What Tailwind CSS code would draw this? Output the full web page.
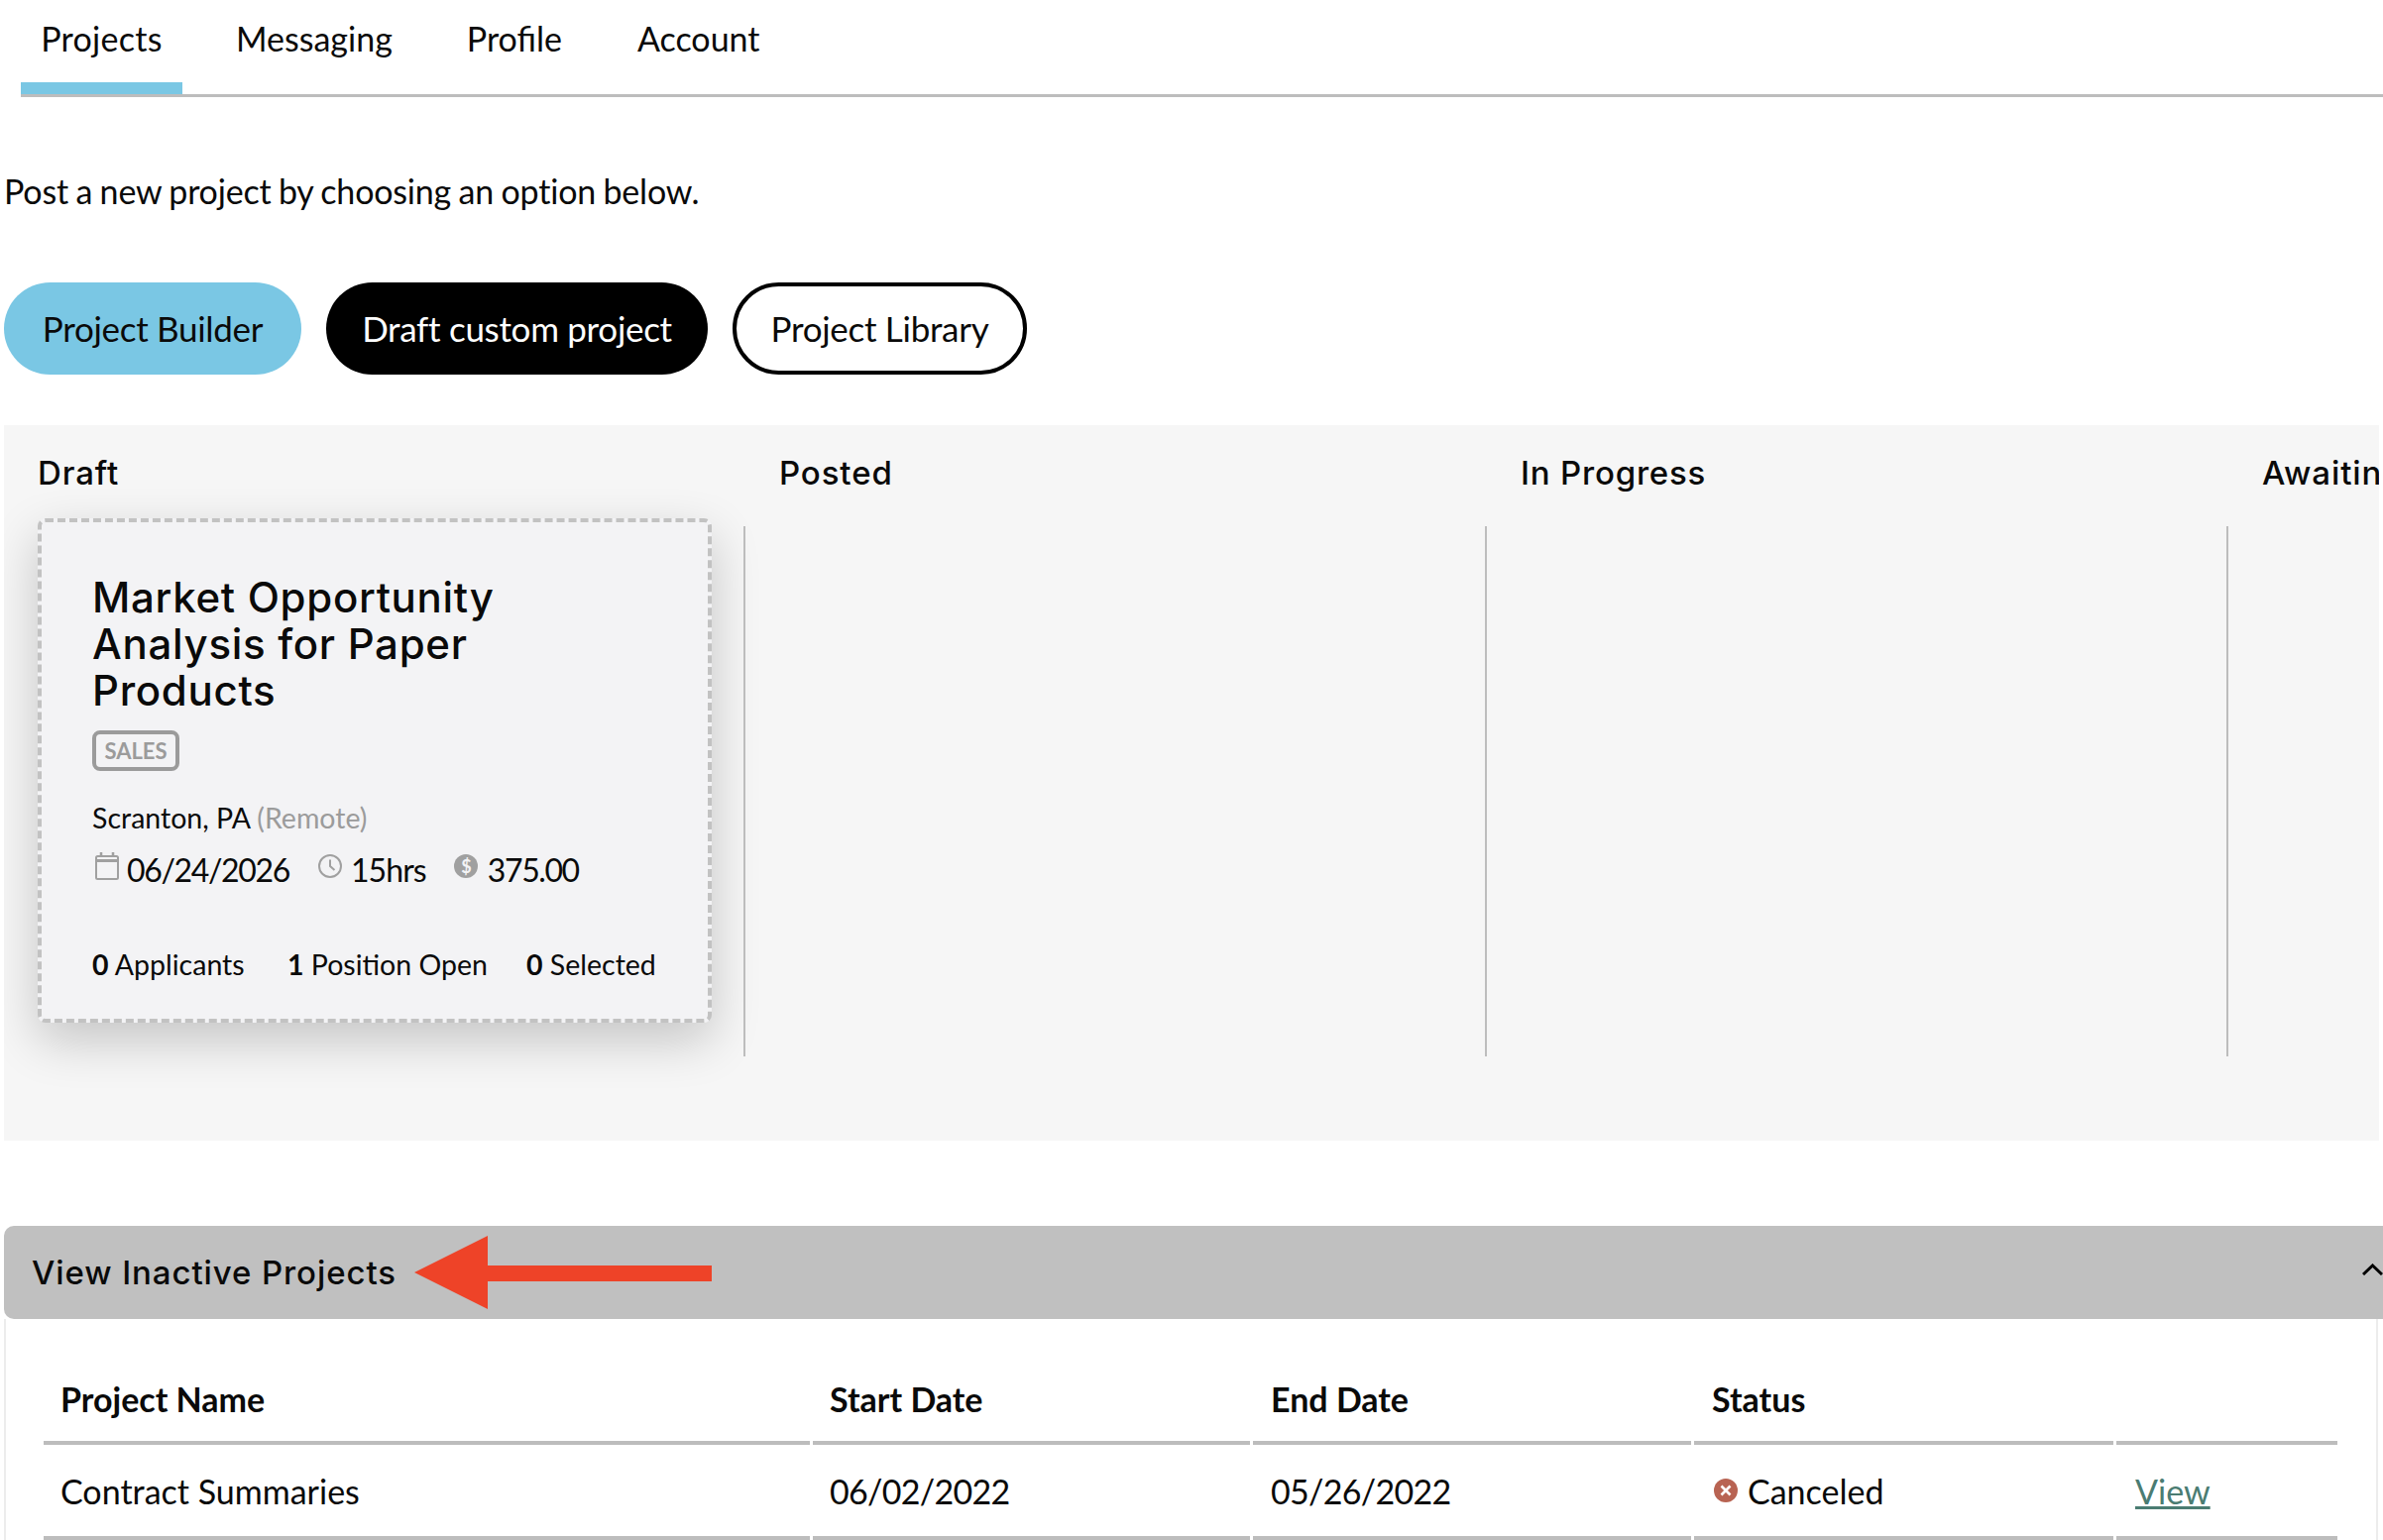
<!DOCTYPE html>
<html lang="en">
<head>
  <meta charset="UTF-8" />
  <title>Projects</title>
  <script src="https://cdn.jsdelivr.net/npm/@tailwindcss/browser@4"></script>
</head>
<body class="bg-white text-[#0a0a0a] font-['Lato',sans-serif]">
<div class="h-[1554px] w-[2404px] overflow-hidden">

  <!-- Tabs -->
  <nav class="ml-[21px] h-[98px] flex border-b-[3px] border-[#bdbdbd] text-[34px] leading-[77px]">
    <a class="w-[163px] h-[95px] text-center border-b-[12px] border-[#7ac7e4] tracking-[0.3px]">Projects</a>
    <a class="ml-[54px]">Messaging</a>
    <a class="ml-[75px]">Profile</a>
    <a class="ml-[76px]">Account</a>
  </nav>

  <p class="ml-[4px] mt-[72px] text-[34px] leading-[46px] tracking-[-0.2px] [word-spacing:-1px]">Post a new project by choosing an option below.</p>

  <!-- Buttons -->
  <div class="ml-[4px] mt-[69px] flex gap-[25px] text-[35px] tracking-[-0.3px]">
    <button class="w-[300px] h-[93px] rounded-full bg-[#7ac7e4]">Project Builder</button>
    <button class="w-[385px] h-[93px] rounded-full bg-black text-white">Draft custom project</button>
    <button class="w-[297px] h-[93px] rounded-full border-[4px] border-black">Project Library</button>
  </div>

  <!-- Board -->
  <section class="ml-[4px] mt-[51px] w-[2396px] h-[722px] bg-[#f6f6f6] overflow-hidden flex pl-[34px] font-['Inter',sans-serif]">
    <div class="w-[712px] shrink-0">
      <h3 class="pt-[25px] text-[33px] leading-[46px] font-medium tracking-[0.9px]">Draft</h3>
      <div class="mt-[23px] w-[680px] h-[509px] box-border bg-[#f3f3f5] border-[4px] border-dashed border-[#c2c2c2] rounded-[8px] shadow-[0_18px_50px_rgba(0,0,0,0.2)] pl-[51px] pt-[52px]">
        <h2 class="text-[42px] leading-[47px] font-medium tracking-[0.7px] w-[500px]">Market Opportunity Analysis for Paper Products</h2>
        <span class="mt-[17px] inline-block w-[88px] h-[41px] border-[4px] border-[#9b9b9b] rounded-[8px] text-center font-['Lato',sans-serif] text-[22px] leading-[33px] font-bold text-[#9b9b9b]">SALES</span>
        <div class="font-['Lato',sans-serif]">
          <p class="mt-[25px] text-[28.5px] leading-[44px]">Scranton, PA <span class="text-[#9b9b9b]">(Remote)</span></p>
          <div class="mt-[9px] flex items-center text-[32px] leading-[44px] tracking-[-0.9px]">
            <svg class="ml-[3px] -mt-[8px] w-[24px] h-[28px]" viewBox="0 0 24 28" fill="none" stroke="#a0a0a0" stroke-width="2"><rect x="1" y="4" width="22" height="23" rx="1.5"/><path d="M1 8.5h22" stroke-width="3"/><path d="M6 0v5M18 0v5" stroke-width="2.5"/></svg>
            <span class="ml-[8px] tracking-[-1.35px]">06/24/2026</span>
            <svg class="ml-[29px] -mt-[8px] w-[24px] h-[24px]" viewBox="0 0 24 24" fill="none" stroke="#a0a0a0" stroke-width="2"><circle cx="12" cy="12" r="11"/><path d="M12 5.5V12l4.5 4"/></svg>
            <span class="ml-[9px]">15hrs</span>
            <svg class="ml-[28px] -mt-[8px] w-[24px] h-[24px]" viewBox="0 0 24 24"><circle cx="12" cy="12" r="12" fill="#a0a0a0"/><text x="12" y="18.5" text-anchor="middle" font-size="18" font-weight="700" fill="#f3f3f5" font-family="Lato">$</text></svg>
            <span class="ml-[10px] tracking-[-1.4px]">375.00</span>
          </div>
          <div class="mt-[51px] flex text-[28.5px] leading-[44px]">
            <span class="w-[197px]"><b>0</b> Applicants</span>
            <span class="w-[241px]"><b>1</b> Position Open</span>
            <span><b>0</b> Selected</span>
          </div>
        </div>
      </div>
    </div>
    <div class="w-[748px] shrink-0 h-[637px] border-l-[2px] border-[#bdbdbd] [border-image:linear-gradient(to_bottom,transparent_103px,#bdbdbd_103px)_1]">
      <h3 class="pl-[34px] pt-[25px] text-[33px] leading-[46px] font-medium tracking-[0.9px]">Posted</h3>
    </div>
    <div class="w-[748px] shrink-0 h-[637px] border-l-[2px] border-[#bdbdbd] [border-image:linear-gradient(to_bottom,transparent_103px,#bdbdbd_103px)_1]">
      <h3 class="pl-[34px] pt-[25px] text-[33px] leading-[46px] font-medium tracking-[0.8px]">In Progress</h3>
    </div>
    <div class="w-[748px] shrink-0 h-[637px] border-l-[2px] border-[#bdbdbd] [border-image:linear-gradient(to_bottom,transparent_103px,#bdbdbd_103px)_1]">
      <h3 class="pl-[34px] pt-[25px] text-[33px] leading-[46px] font-medium tracking-[0.9px] whitespace-nowrap">Awaiting Review</h3>
    </div>
  </section>

  <!-- Inactive projects -->
  <section class="ml-[4px] mt-[86px] relative">
    <div class="h-[94px] w-[2400px] bg-[#c0c0c0] rounded-l-[10px] flex items-center pl-[28px] pt-[2px] font-['Inter',sans-serif] text-[33px] font-medium tracking-[0.9px]">
      View Inactive Projects
      <svg class="absolute right-0 top-[38px] w-[21px] h-[12px]" viewBox="0 0 21 12" fill="none" stroke="#000" stroke-width="3"><path d="M1 11 10.5 2 20 11"/></svg>
    </div>
    <svg class="absolute left-[414px] top-[10px] w-[300px] h-[74px]" viewBox="0 0 300 74"><path d="M0 37 74 0V30H300V46H74V74Z" fill="#ee4328"/></svg>
    <div class="w-[2395px] h-[230px] border-x-[2px] border-[#ececec] pl-[35px] pt-[58px]">
      <table class="table-fixed border-separate border-spacing-x-[3.5px] border-spacing-y-0 text-[34px] leading-[46px]">
        <colgroup><col class="w-[773px]"><col class="w-[441px]"><col class="w-[442px]"><col class="w-[423px]"><col class="w-[223px]"></colgroup>
        <thead>
          <tr class="text-left">
            <th class="pl-[17px] pb-[19px] border-b-[4px] border-[#bdbdbd]">Project Name</th>
            <th class="pl-[17px] pb-[19px] border-b-[4px] border-[#bdbdbd]">Start Date</th>
            <th class="pl-[18px] pb-[19px] border-b-[4px] border-[#bdbdbd]">End Date</th>
            <th class="pl-[18px] pb-[19px] border-b-[4px] border-[#bdbdbd]">Status</th>
            <th class="border-b-[4px] border-[#bdbdbd]"></th>
          </tr>
        </thead>
        <tbody>
          <tr>
            <td class="pl-[17px] pt-[24px] pb-[22px] border-b-[4px] border-[#bdbdbd]">Contract Summaries</td>
            <td class="pl-[17px] pt-[24px] pb-[22px] border-b-[4px] border-[#bdbdbd] tracking-[-0.7px]">06/02/2022</td>
            <td class="pl-[18px] pt-[24px] pb-[22px] border-b-[4px] border-[#bdbdbd] tracking-[-0.7px]">05/26/2022</td>
            <td class="pl-[17px] pt-[24px] pb-[22px] border-b-[4px] border-[#bdbdbd]">
              <span class="flex items-center">
                <svg class="ml-[3px] -mt-[3px] w-[24px] h-[24px]" viewBox="0 0 24 24"><circle cx="12" cy="12" r="12" fill="#b86352"/><path d="M7.5 7.5l9 9M16.5 7.5l-9 9" stroke="#fff" stroke-width="2.6"/></svg>
                <span class="ml-[10px]">Canceled</span>
              </span>
            </td>
            <td class="pl-[19px] pt-[24px] pb-[22px] border-b-[4px] border-[#bdbdbd]"><a class="text-[#4a7c72] underline">View</a></td>
          </tr>
        </tbody>
      </table>
    </div>
  </section>
</div>
</body>
</html>
